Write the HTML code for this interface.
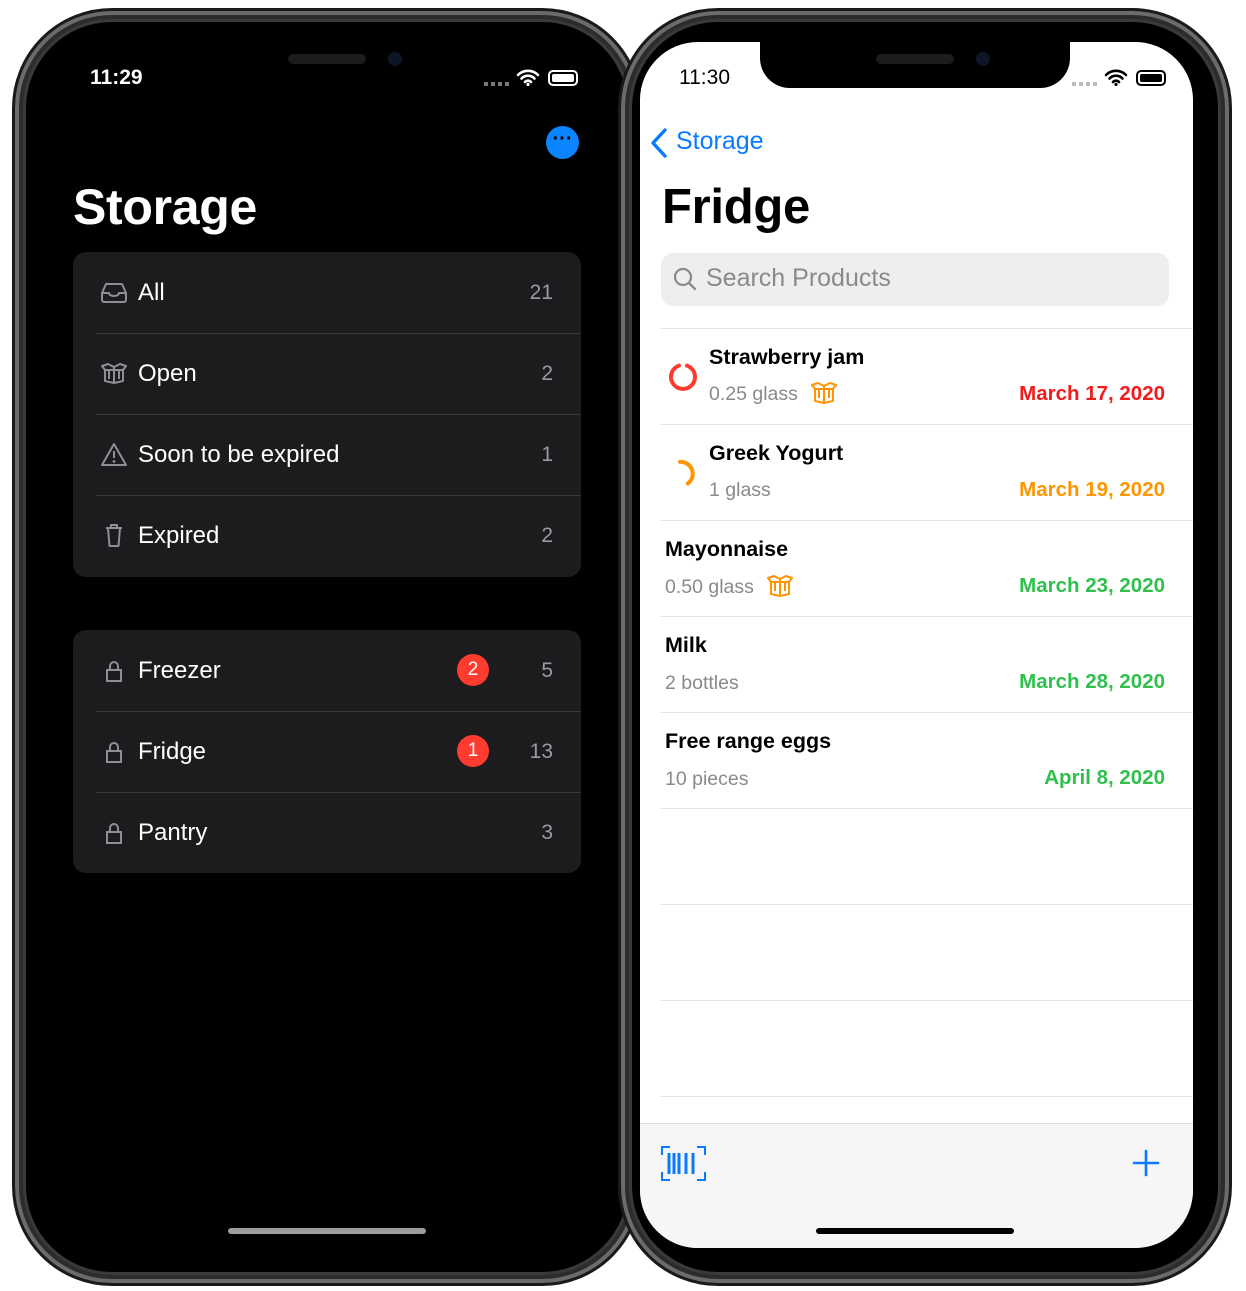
<!DOCTYPE html>
<html><head><meta charset="utf-8"><style>
*{margin:0;padding:0;box-sizing:border-box}
body{width:1246px;height:1291px;background:#fff;position:relative;overflow:hidden;font-family:"Liberation Sans",sans-serif}
.a{position:absolute}
.frame{position:absolute;border-radius:100px;background:#3a3a3c;border:3px solid #1a1a1a;box-shadow:inset 0 0 0 4px #6b6b6e,inset 0 0 0 8px #2c2c2e}
.bezel{position:absolute;background:#000;border-radius:86px}
.row{position:absolute;left:0;right:0;height:81px}
.lt{position:absolute;left:65px;top:0;line-height:81px;font-size:24px;color:#fff}
.cnt{position:absolute;right:28px;top:0;line-height:81px;font-size:21px;color:#9a9a9f}
.sep{position:absolute;left:23px;right:0;height:1px;background:#38383a}
.ic{position:absolute;left:27px;top:27px}
.badge{position:absolute;left:384px;top:24px;width:32px;height:32px;border-radius:50%;background:#ff3b30;color:#fff;font-size:19px;text-align:center;line-height:32px}
.rs{position:absolute;left:661px;width:532px;height:1px;background:#e3e3e6}
.t{position:absolute;font-size:21.5px;font-weight:bold;color:#000}
.s{position:absolute;font-size:19.5px;color:#8a8a8e}
.d{position:absolute;right:81px;font-size:20.5px;font-weight:bold}
</style></head><body>
<!-- left phone -->
<div class="frame" style="left:12px;top:8px;width:630px;height:1278px"></div>
<div class="bezel" style="left:26px;top:22px;width:602px;height:1250px"></div>
<div class="a" style="left:288px;top:54px;width:78px;height:10px;border-radius:5px;background:#1c1c1e"></div>
<div class="a" style="left:388px;top:52px;width:14px;height:14px;border-radius:50%;background:#0e1526"></div>
<div class="a" style="left:90px;top:66px;font-size:21px;font-weight:bold;color:#fff">11:29</div>
<div class="a" style="left:484px;top:82px;width:26px;height:4px;background:repeating-linear-gradient(90deg,#777 0 4px,transparent 4px 7px)"></div>
<svg class="a" style="left:516px;top:68px" width="24" height="18" viewBox="0 0 24 18"><path d="M2 7a14 14 0 0 1 20 0M5.5 10.5a9 9 0 0 1 13 0M9 14a4 4 0 0 1 6 0" stroke="#fff" stroke-width="2.6" fill="none" stroke-linecap="round"/><circle cx="12" cy="16.5" r="1.6" fill="#fff"/></svg>
<div class="a" style="left:548px;top:70px;width:30px;height:16px;border:2px solid #fff;border-radius:5px;padding:2px"><div style="background:#fff;height:100%;border-radius:2px"></div></div>
<div class="a" style="left:546px;top:126px;width:33px;height:33px;border-radius:50%;background:#0a84ff;color:#000;font-size:20px;font-weight:bold;text-align:center;line-height:26px">···</div>
<div class="a" style="left:73px;top:178px;font-size:50px;font-weight:bold;color:#fff;letter-spacing:-0.3px">Storage</div>
<div class="a" style="left:73px;top:252px;width:508px;height:325px;border-radius:13px;background:#1c1c1e">
 <div class="row" style="top:0"><svg class="ic" width="28" height="28" viewBox="0 0 28 28"><path d="M2 14l4-9h16l4 9v7a2 2 0 0 1-2 2H4a2 2 0 0 1-2-2zM2 14h7a5 3 0 0 0 10 0h7" stroke="#8e8e93" stroke-width="2" fill="none" stroke-linejoin="round"/></svg><div class="lt">All</div><div class="cnt">21</div></div>
 <div class="sep" style="top:81px"></div>
 <div class="row" style="top:81px"><svg class="ic" width="28" height="28" viewBox="0 0 28 28"><path d="M5 10v11l9 2 9-2V10M2 6l6-2 6 3 6-3 6 2-3 4H5zM14 7v16M9 10v9M19 10v9" stroke="#8e8e93" stroke-width="2" fill="none" stroke-linejoin="round"/></svg><div class="lt">Open</div><div class="cnt">2</div></div>
 <div class="sep" style="top:162px"></div>
 <div class="row" style="top:162px"><svg class="ic" width="28" height="28" viewBox="0 0 28 28"><path d="M14 3L2 24h24zM14 10v7" stroke="#8e8e93" stroke-width="2" fill="none" stroke-linejoin="round"/><circle cx="14" cy="20.5" r="1.4" fill="#8e8e93"/></svg><div class="lt">Soon to be expired</div><div class="cnt">1</div></div>
 <div class="sep" style="top:243px"></div>
 <div class="row" style="top:243px"><svg class="ic" width="28" height="28" viewBox="0 0 28 28"><path d="M6 6h16M11 6V3h6v3M8 6l1.5 18h9L20 6" stroke="#8e8e93" stroke-width="2" fill="none" stroke-linejoin="round"/></svg><div class="lt">Expired</div><div class="cnt">2</div></div>
</div>
<div class="a" style="left:73px;top:630px;width:508px;height:243px;border-radius:13px;background:#1c1c1e">
 <div class="row" style="top:0"><svg class="ic" width="28" height="28" viewBox="0 0 28 28"><path d="M7 13h14v11H7zM10 13V9a4 4 0 0 1 8 0v4" stroke="#8e8e93" stroke-width="2" fill="none"/></svg><div class="lt">Freezer</div><div class="badge">2</div><div class="cnt">5</div></div>
 <div class="sep" style="top:81px"></div>
 <div class="row" style="top:81px"><svg class="ic" width="28" height="28" viewBox="0 0 28 28"><path d="M7 13h14v11H7zM10 13V9a4 4 0 0 1 8 0v4" stroke="#8e8e93" stroke-width="2" fill="none"/></svg><div class="lt">Fridge</div><div class="badge">1</div><div class="cnt">13</div></div>
 <div class="sep" style="top:162px"></div>
 <div class="row" style="top:162px"><svg class="ic" width="28" height="28" viewBox="0 0 28 28"><path d="M7 13h14v11H7zM10 13V9a4 4 0 0 1 8 0v4" stroke="#8e8e93" stroke-width="2" fill="none"/></svg><div class="lt">Pantry</div><div class="cnt">3</div></div>
</div>
<div class="a" style="left:228px;top:1228px;width:198px;height:6px;border-radius:3px;background:#9d9d9d"></div>

<!-- right phone -->
<div class="frame" style="left:618px;top:8px;width:614px;height:1278px"></div>
<div class="bezel" style="left:632px;top:22px;width:586px;height:1250px"></div>
<div class="a" style="left:640px;top:42px;width:553px;height:1206px;border-radius:58px;background:#fff;overflow:hidden">
 <div class="a" style="left:0;top:1081px;width:553px;height:125px;background:#f6f6f7;border-top:1px solid #dcdcde"></div>
</div>
<div class="a" style="left:760px;top:36px;width:310px;height:52px;background:#000;border-radius:0 0 30px 30px"></div>
<div class="a" style="left:876px;top:54px;width:78px;height:10px;border-radius:5px;background:#1c1c1e"></div>
<div class="a" style="left:976px;top:52px;width:14px;height:14px;border-radius:50%;background:#0e1526"></div>
<div class="a" style="left:679px;top:66px;font-size:21px;color:#000">11:30</div>
<div class="a" style="left:1072px;top:82px;width:26px;height:4px;background:repeating-linear-gradient(90deg,#bbb 0 4px,transparent 4px 7px)"></div>
<svg class="a" style="left:1104px;top:68px" width="24" height="18" viewBox="0 0 24 18"><path d="M2 7a14 14 0 0 1 20 0M5.5 10.5a9 9 0 0 1 13 0M9 14a4 4 0 0 1 6 0" stroke="#000" stroke-width="2.6" fill="none" stroke-linecap="round"/><circle cx="12" cy="16.5" r="1.6" fill="#000"/></svg>
<div class="a" style="left:1136px;top:70px;width:30px;height:16px;border:2px solid #000;border-radius:5px;padding:2px"><div style="background:#000;height:100%;border-radius:2px"></div></div>
<svg class="a" style="left:650px;top:127px" width="18" height="32" viewBox="0 0 18 32"><path d="M15 3L3 16l12 13" stroke="#0a7aff" stroke-width="3.4" fill="none" stroke-linecap="round" stroke-linejoin="round"/></svg>
<div class="a" style="left:676px;top:127px;font-size:25px;color:#0a7aff">Storage</div>
<div class="a" style="left:662px;top:179px;font-size:49px;font-weight:bold;color:#000;letter-spacing:-0.3px">Fridge</div>
<div class="a" style="left:661px;top:253px;width:508px;height:53px;border-radius:12px;background:#eeeeef"></div>
<svg class="a" style="left:672px;top:266px" width="26" height="26" viewBox="0 0 26 26"><circle cx="11" cy="11" r="8" stroke="#8a8a8e" stroke-width="2.2" fill="none"/><path d="M17 17l6 6" stroke="#8a8a8e" stroke-width="2.4" stroke-linecap="round"/></svg>
<div class="a" style="left:706px;top:264px;font-size:25px;color:#8a8a8e">Search Products</div>

<div class="rs" style="top:328px"></div>
<div class="rs" style="top:424px"></div>
<div class="rs" style="top:520px"></div>
<div class="rs" style="top:616px"></div>
<div class="rs" style="top:712px"></div>
<div class="rs" style="top:808px"></div>
<div class="rs" style="top:904px"></div>
<div class="rs" style="top:1000px"></div>
<div class="rs" style="top:1096px"></div>

<svg class="a" style="left:666px;top:360px" width="34" height="34" viewBox="0 0 34 34"><path d="M21 5.6A12 12 0 1 1 13 5.6" stroke="#ff3b30" stroke-width="4" fill="none" stroke-linecap="round"/></svg>
<div class="t" style="left:709px;top:345px">Strawberry jam</div>
<div class="s" style="left:709px;top:383px">0.25 glass</div>
<svg class="a" style="left:810px;top:381px" width="28" height="24" viewBox="0 0 28 24"><path d="M5 8v12l9 2 9-2V8M2 4l6-2 6 3 6-3 6 2-3 4H5zM14 5v17M9 8v9M19 8v9" stroke="#ff9500" stroke-width="2" fill="none" stroke-linejoin="round"/></svg>
<div class="d" style="top:382px;color:#f21b1b">March 17, 2020</div>

<svg class="a" style="left:666px;top:456px" width="34" height="34" viewBox="0 0 34 34"><path d="M18 5.5A12 12 0 0 1 18 28.5" transform="rotate(-20 17 17)" stroke="#ff9500" stroke-width="4" fill="none" stroke-linecap="round"/></svg>
<div class="t" style="left:709px;top:441px">Greek Yogurt</div>
<div class="s" style="left:709px;top:479px">1 glass</div>
<div class="d" style="top:478px;color:#ff9500">March 19, 2020</div>

<div class="t" style="left:665px;top:537px">Mayonnaise</div>
<div class="s" style="left:665px;top:576px">0.50 glass</div>
<svg class="a" style="left:766px;top:574px" width="28" height="24" viewBox="0 0 28 24"><path d="M5 8v12l9 2 9-2V8M2 4l6-2 6 3 6-3 6 2-3 4H5zM14 5v17M9 8v9M19 8v9" stroke="#ff9500" stroke-width="2" fill="none" stroke-linejoin="round"/></svg>
<div class="d" style="top:574px;color:#2fbf4d">March 23, 2020</div>

<div class="t" style="left:665px;top:633px">Milk</div>
<div class="s" style="left:665px;top:672px">2 bottles</div>
<div class="d" style="top:670px;color:#2fbf4d">March 28, 2020</div>

<div class="t" style="left:665px;top:729px">Free range eggs</div>
<div class="s" style="left:665px;top:768px">10 pieces</div>
<div class="d" style="top:766px;color:#2fbf4d">April 8, 2020</div>

<svg class="a" style="left:661px;top:1146px" width="45" height="35" viewBox="0 0 45 35"><path d="M1 9V1h8M36 1h8v8M44 26v8h-8M9 34H1v-8" stroke="#0a7aff" stroke-width="2" fill="none"/><path d="M8 7v21M13 7v21M18 7v21M25 7v21M32 7v21" stroke="#0a7aff" stroke-width="3"/></svg>
<svg class="a" style="left:1132px;top:1149px" width="28" height="28" viewBox="0 0 28 28"><path d="M14 2v24M2 14h24" stroke="#0a7aff" stroke-width="2.6" stroke-linecap="round"/></svg>
<div class="a" style="left:816px;top:1228px;width:198px;height:6px;border-radius:3px;background:#000"></div>
</body></html>
